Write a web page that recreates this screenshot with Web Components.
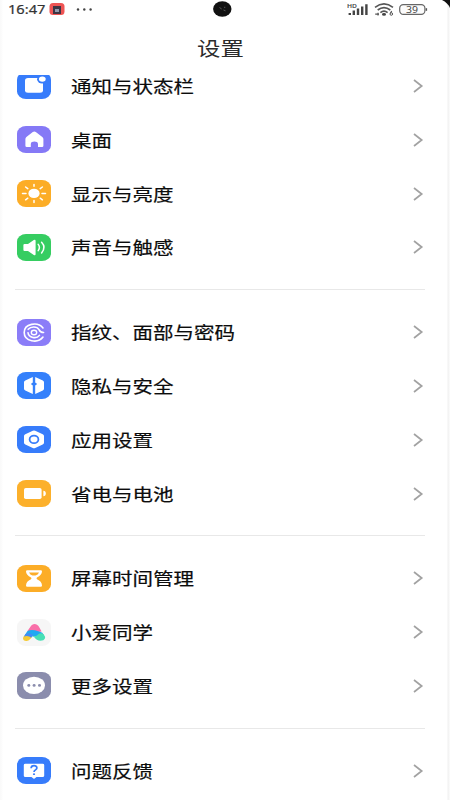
<!DOCTYPE html>
<html lang="zh-CN">
<head>
<meta charset="utf-8">
<title>设置</title>
<style>
html,body{margin:0;padding:0;background:#fdfdfd}
body{width:450px;height:800px;overflow:hidden;font-family:"Noto Sans CJK SC",sans-serif}
</style>
</head>
<body>
<settings-screen></settings-screen>
<script>
const define = (name, html, setup) => customElements.define(name, class extends HTMLElement {
  constructor() {
    super();
    this.attachShadow({ mode: 'open' }).innerHTML = html;
  }
  connectedCallback() { if (setup) setup(this, this.shadowRoot); }
});

const ICONS = {
  notify: ['#377cfb', '<rect x="8" y="6" width="18" height="14.8" rx="3" ry="2.5" fill="#fff"/><ellipse cx="25.1" cy="7.3" rx="5" ry="4.2" fill="#377cfb"/><ellipse cx="25.3" cy="7.1" rx="3.4" ry="2.7" fill="#fff"/>'],
  home: ['#8579f6', '<path d="M15.8 6Q17.3 5 18.8 6L25.3 10.9Q26.4 11.8 26.4 13V19.8Q26.4 21 25.1 21H21V18C21 14.8 13.8 14.8 13.8 18V21H9.8Q8.4 21 8.4 19.8V13Q8.4 11.8 9.4 10.9Z" fill="#fff"/>'],
  sun: ['#fcad27', '<ellipse cx="17" cy="13.4" rx="5.6" ry="4.7" fill="#fff"/><path d="M17 4.4V6.3M17 20.5V22.4M5.5 13.4H9M25 13.4H28.5M8.6 7L10.8 8.6M25.4 7L23.2 8.6M8.6 19.8L10.8 18.2M25.4 19.8L23.2 18.2" stroke="#fff" stroke-width="1.5" stroke-linecap="round"/>'],
  sound: ['#36cd61', '<path d="M7.6 10H11L16.8 6Q18.6 5 18.6 7V20Q18.6 22 16.8 21L11 17H7.6Q6.4 17 6.4 16V11Q6.4 10 7.6 10Z" fill="#fff"/><path d="M21.2 10.4Q23.6 13.4 21.2 16.6M24.6 8.3Q29.4 13.4 24.6 18.9" fill="none" stroke="#fff" stroke-width="1.5" stroke-linecap="round"/>'],
  finger: ['#8b7df8', '<g fill="none" stroke="#fff" stroke-width="1.6" stroke-linecap="round"><path d="M26 8.9C20.5 2.2 7.2 4.6 7.2 13.5C7.2 22.6 20.8 24.9 26 18.1"/><path d="M11.2 10.3C14 7.1 20 7.3 22 10.6Q23.2 13.5 26.6 13.5M11 13.7C11.6 18.9 19.6 20.2 22.4 16.4"/></g><ellipse cx="17" cy="13.5" rx="2.7" ry="2.3" fill="none" stroke="#fff" stroke-width="1.4"/>'],
  privacy: ['#3480fb', '<path d="M15.8 4.9V10.4L13.8 12L15.8 13.5V22L8.3 18.6Q7 18 7 16.8V10.2Q7 9 8.3 8.4ZM18.2 4.9L25.8 8.4Q27 9 27 10.2V16.8Q27 18 25.8 18.6L18.2 22V13.5L20.2 12L18.2 10.4Z" fill="#fff"/>'],
  apps: ['#377cfb', '<path d="M15.8 4.8Q17 4.2 18.2 4.8L25.7 8.2Q27 8.8 27 10V16.8Q27 18 25.7 18.6L18.2 22Q17 22.6 15.8 22L8.3 18.6Q7 18 7 16.8V10Q7 8.8 8.3 8.2Z" fill="#fff"/><ellipse cx="17" cy="13.4" rx="4.4" ry="3.7" fill="none" stroke="#377cfb" stroke-width="1.8"/>'],
  battery: ['#fcb02b', '<rect x="7" y="8" width="17.6" height="11" rx="1.8" fill="#fff"/><path d="M26.4 10.8Q28.8 10.8 28.8 13.5Q28.8 16.2 26.4 16.2Z" fill="#fff"/>'],
  hourglass: ['#fcad27', '<path d="M10.2 5.3H23.8Q25 5.3 25 6.4Q24.8 10 20 12.6Q19 13.4 20 14.2Q24.8 16.3 25 20.5Q25 21.8 23.8 21.8H10.2Q9 21.8 9 20.5Q9.2 16.3 14 14.2Q15 13.4 14 12.6Q9.2 10 9 6.4Q9 5.3 10.2 5.3Z" fill="#fff"/><path d="M12 7.4H22Q21 9.6 18.5 10.6H15.5Q13 9.6 12 7.4Z" fill="#fcad27"/>'],
  xiaoai: ['#f6f6f6', '<path d="M13.6 7.6C15.2 4.2 20 4.2 21.8 7.6L24.6 12.5L17 13.5L10.3 12.3Z" fill="#f96fa9"/><path d="M10.5 11.9Q13.5 10.4 18 11.2Q22.5 12.2 25.3 13.7L27 16.5L17 17.5L7.5 16.6Z" fill="#20a9f2"/><path d="M6 19Q6.6 15.6 10.7 15.9L15.4 16.5Q13.5 21.5 9.6 21.9Q6 22.1 6 19Z" fill="#f5cb36"/><path d="M8.3 15.2Q12.5 13 16 16L14.2 18.8Q12 16.4 7 17.4Z" fill="#448af5"/><path d="M15 17Q19.5 17.8 21.3 15.3Q24 13 26.6 15.3Q28.6 17.6 27.8 19.7Q27 21.7 23.6 21.7Q19.3 21.7 17.6 18.6Z" fill="#48dfb5"/>'],
  more: ['#8b8dad', '<ellipse cx="17" cy="13.4" rx="11" ry="8.7" fill="#fff"/><g fill="#8b8dad"><ellipse cx="11.8" cy="13.4" rx="1.5" ry="1.3"/><ellipse cx="17.1" cy="13.4" rx="1.5" ry="1.3"/><ellipse cx="22.5" cy="13.4" rx="1.5" ry="1.3"/></g>'],
  feedback: ['#377cfb', '<path d="M8.4 6.8H25.6Q27.2 6.8 27.2 8V18.8Q27.2 20 25.6 20H19.5L17.6 21.5Q17 21.9 16.4 21.5L14.5 20H8.4Q6.8 20 6.8 18.8V8Q6.8 6.8 8.4 6.8Z" fill="#fff"/><path d="M14.1 11.2C14.2 7.8 20 7.9 19.9 11C19.9 12.9 17 12.9 17 15" fill="none" stroke="#377cfb" stroke-width="1.7"/><ellipse cx="17" cy="17.2" rx="1.1" ry=".9" fill="#377cfb"/>']
};

define('settings-icon', `<style>:host{display:block;width:34px;height:27px;flex:none}:host([name="notify"]){clip-path:inset(2.7px 0 0)}svg{display:block}</style><svg width="34" height="27" viewBox="0 0 34 27"></svg>`,
  (el, root) => {
    const [color, art] = ICONS[el.getAttribute('name')];
    root.querySelector('svg').innerHTML = `<rect width="34" height="27" rx="9" ry="7.5" fill="${color}"/>${art}`;
  });

define('settings-row', `<style>
:host{display:flex;align-items:center;height:53.85px;padding:0 26px 0 17px;box-sizing:border-box}
.label{flex:1;margin-left:20px;padding-top:.2px;font-size:17px;line-height:20px;color:#0c0c0c;-webkit-text-stroke:.2px #0c0c0c;white-space:nowrap}
.label span{display:block;width:max-content;transform:scaleX(1.206);transform-origin:0 50%}
svg{display:block;flex:none}
</style><div class="label"><span><slot></slot></span></div>
<svg width="12" height="14" viewBox="0 0 12 14"><path d="M2 1L9.7 7L2 13" fill="none" stroke="#a2a2a2" stroke-width="1.7"/></svg>`,
  (el, root) => {
    const icon = document.createElement('settings-icon');
    icon.setAttribute('name', el.getAttribute('icon'));
    root.prepend(icon);
  });

define('settings-group', `<style>
:host{display:block}
:host(:not(:first-of-type))::before{content:"";display:block;height:1px;margin:15px 25px 14.8px 15px;background:#e8e8e8}
</style><slot></slot>`);

define('status-bar', `<style>
:host{display:flex;align-items:center;height:18px;padding:0 22px 0 8px;position:relative;box-sizing:border-box;color:#333}
.time{width:41px;padding-top:1px;font:12px/18px "Noto Sans",sans-serif;-webkit-text-stroke:.2px #333}
.time span{display:block;width:max-content;transform:scaleX(1.22);transform-origin:0 50%}
svg{display:block}
.gap{flex:1}
.camera{position:absolute;left:213px;top:1px}
.corner{position:absolute;right:0;top:0}
.right{display:flex;gap:5px;align-items:center}
</style>
<div class="time"><span>16:47</span></div>
<svg width="48" height="16" viewBox="0 0 48 16"><rect x=".5" y="2" width="15" height="12" rx="3.5" fill="#ee5454"/><path d="M4 5H12V13H4Z" fill="#3d3544"/><path d="M6 8H10V11H6Z" fill="#929aae"/><g fill="#444"><circle cx="29" cy="8.5" r="1.2"/><circle cx="35.3" cy="8.5" r="1.2"/><circle cx="41.6" cy="8.5" r="1.2"/></g></svg>
<div class="gap"></div>
<div class="right">
<svg width="22" height="16" viewBox="0 0 22 16"><text x="0" y="6.7" font-family="Noto Sans,sans-serif" font-size="6" font-weight="600" textLength="10" lengthAdjust="spacingAndGlyphs" fill="#444">HD</text><path d="M2.8 12V14M6.8 9.5V14M11 7.5V14M15.2 5.5V14M19.4 3.2V14" stroke="#444" stroke-width="2.4"/></svg>
<svg width="20" height="16" viewBox="0 0 20 16"><g fill="none" stroke="#555" stroke-width="1.6"><path d="M1 6.3Q10 -.5 19 6.3M3.7 9Q10 4.2 16.3 9M6.4 11.7Q10 8.7 13.6 11.7"/></g><ellipse cx="10" cy="13.4" rx="2" ry="1.3" fill="#444"/><path d="M1.2 13.2H5M4 11.7V14.5" stroke="#555" stroke-width="1.2"/><path d="M17.7 10L16.4 12.3" stroke="#555" stroke-width="1.1"/><circle cx="17.3" cy="13" r="1.3" fill="none" stroke="#555"/></svg>
<svg width="29" height="16" viewBox="0 0 29 16"><rect x=".7" y="3.6" width="25.2" height="9.8" rx="3.6" fill="#fcfcfc" stroke="#666" stroke-width="1.2"/><path d="M27.4 7.2V9.8" stroke="#555" stroke-width="1.4"/><text x="7" y="11.7" font-family="Noto Sans,sans-serif" font-size="8.8" textLength="12" lengthAdjust="spacingAndGlyphs" fill="#444">39</text></svg>
</div>
<svg class="camera" width="19" height="16" viewBox="0 0 19 16"><ellipse cx="9.3" cy="8" rx="9.2" ry="7.7" fill="#111"/><path d="M6.5 6.5L8.7 8M10.5 9L12.5 9.8M11 6.3H12.3" stroke="#555" stroke-width="1"/></svg>
<svg class="corner" width="8" height="8" viewBox="0 0 8 8"><path d="M0 0H8V8Q5.8 2.8 0 0Z" fill="#111"/></svg>`);

define('settings-screen', `<style>
:host{display:flex;flex-direction:column;width:450px;height:800px;box-sizing:border-box;overflow:hidden;background:linear-gradient(90deg,#fafafa 0 1px,#fff 3px 447px,#f1f1f1 448px,#fcfcfc 450px)}
h1{margin:0;height:57px;flex:none;display:flex;justify-content:center;box-sizing:border-box;padding:15px 9px 0 0;font-size:19.5px;line-height:29px;font-weight:400;color:#2b2b2b}
h1 span{display:block;height:29px;transform:scaleX(1.2)}
main{flex:1;min-height:0}
.list{margin-top:-16.1px}
</style>
<status-bar></status-bar>
<h1><span>设置</span></h1>
<main><div class="list">
<settings-group><settings-row icon="notify">通知与状态栏</settings-row><settings-row icon="home">桌面</settings-row><settings-row icon="sun">显示与亮度</settings-row><settings-row icon="sound">声音与触感</settings-row></settings-group>
<settings-group><settings-row icon="finger">指纹、面部与密码</settings-row><settings-row icon="privacy">隐私与安全</settings-row><settings-row icon="apps">应用设置</settings-row><settings-row icon="battery">省电与电池</settings-row></settings-group>
<settings-group><settings-row icon="hourglass">屏幕时间管理</settings-row><settings-row icon="xiaoai">小爱同学</settings-row><settings-row icon="more">更多设置</settings-row></settings-group>
<settings-group><settings-row icon="feedback">问题反馈</settings-row></settings-group>
</div></main>`);
</script>
</body>
</html>
